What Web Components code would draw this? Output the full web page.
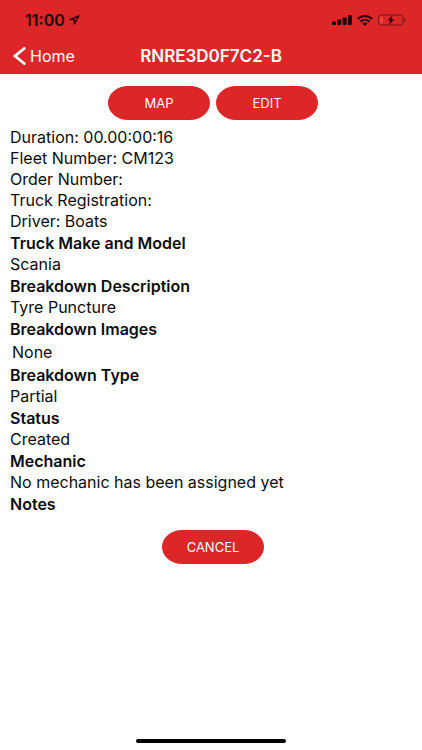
<!DOCTYPE html>
<html lang="en">
<head>
<meta charset="utf-8">
<meta name="viewport" content="width=device-width, initial-scale=1">
<title>Breakdown RNRE3D0F7C2-B</title>
<style>
  body {
    --brand: #dc2628;
    --text: #0c0c0c;
    margin: 0;
    background: #fff;
    color: var(--text);
    font-family: Inter, "Liberation Sans", sans-serif;
    font-size: 16px;
    line-height: 21px;
  }
</style>
</head>
<body>

<app-screen>
  <status-bar slot="top" time="11:00"></status-bar>
  <nav-bar slot="top" back="Home">RNRE3D0F7C2-B</nav-bar>

  <button-row>
    <pill-button>MAP</pill-button>
    <pill-button>EDIT</pill-button>
  </button-row>

  <detail-list>
    <detail-lines>
      <div>Duration: 00.00:00:16</div>
      <div>Fleet Number: CM123</div>
      <div>Order Number:</div>
      <div>Truck Registration:</div>
      <div>Driver: Boats</div>
    </detail-lines>
    <detail-section heading="Truck Make and Model">Scania</detail-section>
    <detail-section heading="Breakdown Description">Tyre Puncture</detail-section>
    <detail-section heading="Breakdown Images" inset>None</detail-section>
    <detail-section heading="Breakdown Type">Partial</detail-section>
    <detail-section heading="Status">Created</detail-section>
    <detail-section heading="Mechanic">No mechanic has been assigned yet</detail-section>
    <detail-section heading="Notes"></detail-section>
  </detail-list>

  <button-row>
    <pill-button>CANCEL</pill-button>
  </button-row>

  <home-indicator slot="bottom"></home-indicator>
</app-screen>

<template id="app-screen">
  <style>
    :host {
      display: flex;
      flex-direction: column;
      min-height: 100vh;
    }
    header {
      background: var(--brand);
      padding-bottom: 2px;
    }
    main {
      flex: 1;
      display: flex;
      flex-direction: column;
      padding-top: 12px;
    }
  </style>
  <header><slot name="top"></slot></header>
  <main><slot></slot></main>
  <slot name="bottom"></slot>
</template>

<template id="status-bar">
  <style>
    :host {
      display: flex;
      align-items: center;
      justify-content: space-between;
      height: 40px;
      padding: 0 16px 0 25px;
      color: #1c0405;
    }
    .time, .icons {
      display: flex;
      align-items: center;
    }
    .time {
      gap: 4px;
      font-weight: 600;
    }
    .icons { gap: 5px; }
    svg { display: block; }
  </style>
  <div class="time">
    <span></span>
    <svg width="11" height="10" viewBox="0 0 11 10" aria-hidden="true">
      <path d="M10 .8 1 4.7h4.4v4.4z" fill="none" stroke="currentColor" stroke-width="1.3" stroke-linejoin="round"/>
    </svg>
  </div>
  <div class="icons">
    <svg width="20" height="10" viewBox="0 0 20 10" fill="currentColor" aria-hidden="true">
      <rect x="0" y="6.5" width="4" height="3.5" rx="1"/>
      <rect x="5.3" y="4.5" width="4" height="5.5" rx="1"/>
      <rect x="10.6" y="2.5" width="4" height="7.5" rx="1"/>
      <rect x="15.9" y="0" width="4" height="10" rx="1"/>
    </svg>
    <svg width="16" height="11" viewBox="0 0 16 11" fill="none" stroke="currentColor" stroke-width="1.9" aria-hidden="true">
      <path d="M.8 4.1C4.8 0 11.2 0 15.2 4.1"/>
      <path d="M3.5 6.7c2.6-2.4 6.4-2.4 9 0"/>
      <path d="M8 10.8 5.4 8.5c1.5-1.3 3.7-1.3 5.2 0z" fill="currentColor" stroke="none"/>
    </svg>
    <svg width="28" height="12" viewBox="0 0 28 12" aria-hidden="true">
      <rect x=".6" y="1" width="24.4" height="10" rx="2.6" fill="none" stroke="#7f1618" stroke-width="1"/>
      <rect x="2" y="2.4" width="3" height="7.2" rx="1" fill="#ff3b35"/>
      <path d="M26.2 4v4c.8-.3 1.3-1.1 1.3-2s-.5-1.7-1.3-2z" fill="#7f1618"/>
      <path d="M14.4 1.6 9.6 6.5h2.7l-1 4 5-5.1h-2.8z" fill="currentColor"/>
    </svg>
  </div>
</template>

<template id="nav-bar">
  <style>
    :host {
      display: grid;
      grid-template-columns: 1fr auto 1fr;
      align-items: center;
      height: 32px;
      padding: 0 12px;
      color: #fff;
    }
    a {
      display: flex;
      align-items: center;
      gap: 4px;
      color: inherit;
      text-decoration: none;
    }
    h1 {
      margin: 0;
      font-size: 17px;
      font-weight: 600;
    }
  </style>
  <a href="#">
    <svg width="14" height="18" viewBox="0 0 14 18" aria-hidden="true">
      <path d="M12.2 1.5 3 9l9.2 7.5" fill="none" stroke="currentColor" stroke-width="2.9" stroke-linecap="round"/>
    </svg>
    <span></span>
  </a>
  <h1><slot></slot></h1>
</template>

<template id="button-row">
  <style>
    :host {
      display: flex;
      justify-content: center;
      gap: 6px;
      padding-left: 4px;
    }
  </style>
  <slot></slot>
</template>

<template id="pill-button">
  <style>
    :host { display: block; }
    button {
      display: block;
      width: 102px;
      height: 34px;
      padding: 0;
      border: 0;
      border-radius: 20px / 17px;
      background: var(--brand);
      color: #fff;
      font: inherit;
      font-size: 13px;
      cursor: pointer;
    }
  </style>
  <button type="button"><slot></slot></button>
</template>

<template id="detail-list">
  <style>
    :host {
      display: flex;
      flex-direction: column;
      gap: 1px;
      padding: 7px 10px 15px;
    }
  </style>
  <slot></slot>
</template>

<template id="detail-lines">
  <style>
    :host { display: block; }
  </style>
  <slot></slot>
</template>

<template id="detail-section">
  <style>
    :host { display: block; }
    h2 {
      margin: 0;
      font-size: inherit;
      font-weight: 600;
    }
    :host([inset]) div { padding: 2px 2px 1px; }
  </style>
  <h2></h2>
  <div><slot></slot></div>
</template>

<template id="home-indicator">
  <style>
    :host {
      display: flex;
      justify-content: center;
      padding-bottom: 7px;
    }
    span {
      width: 150px;
      height: 4px;
      border-radius: 2px;
      background: #000;
    }
  </style>
  <span></span>
</template>

<script>
  // Clones the <template> whose id is the tag name
  class TemplateElement extends HTMLElement {
    connectedCallback() {
      if (this.shadowRoot) {
        return;
      }
      const template = document.getElementById(this.localName);
      this.attachShadow({ mode: "open" }).appendChild(template.content.cloneNode(true));
      this.render();
    }

    render() {}
  }

  class StatusBar extends TemplateElement {
    render() {
      this.shadowRoot.querySelector("span").textContent = this.getAttribute("time");
    }
  }

  class NavBar extends TemplateElement {
    render() {
      this.shadowRoot.querySelector("span").textContent = this.getAttribute("back");
    }
  }

  class DetailSection extends TemplateElement {
    render() {
      this.shadowRoot.querySelector("h2").textContent = this.getAttribute("heading");
    }
  }

  customElements.define("app-screen", class extends TemplateElement {});
  customElements.define("status-bar", StatusBar);
  customElements.define("nav-bar", NavBar);
  customElements.define("button-row", class extends TemplateElement {});
  customElements.define("pill-button", class extends TemplateElement {});
  customElements.define("detail-list", class extends TemplateElement {});
  customElements.define("detail-lines", class extends TemplateElement {});
  customElements.define("detail-section", DetailSection);
  customElements.define("home-indicator", class extends TemplateElement {});
</script>
</body>
</html>
